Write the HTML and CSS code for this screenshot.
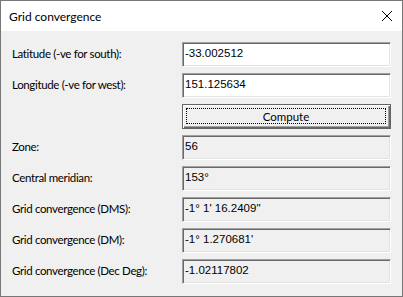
FILE: index.html
```html
<!DOCTYPE html>
<html lang="en">
<head>
    <meta charset="UTF-8">
    <title>Grid convergence</title>
    <link rel="stylesheet" href="styles.css">
</head>
<body>
    <div class="window">
        <div class="titlebar">
            <span class="title">Grid convergence</span>
            <svg class="close" width="12" height="12" viewBox="0 0 12 12">
                <path d="M1 1 L11 11 M11 1 L1 11" stroke="#000" stroke-width="1" fill="none"/>
            </svg>
        </div>
        <div class="content">
            <label class="label">Latitude (-ve for south):</label>
            <div class="field">-33.002512</div>

            <label class="label">Longitude (-ve for west):</label>
            <div class="field">151.125634</div>

            <span></span>
            <div class="button"><span class="focus">Compute</span></div>

            <label class="label">Zone:</label>
            <div class="field readonly">56</div>

            <label class="label">Central meridian:</label>
            <div class="field readonly">153°</div>

            <label class="label">Grid convergence (DMS):</label>
            <div class="field readonly">-1° 1' 16.2409"</div>

            <label class="label">Grid convergence (DM):</label>
            <div class="field readonly">-1° 1.270681'</div>

            <label class="label">Grid convergence (Dec Deg):</label>
            <div class="field readonly">-1.02117802</div>
        </div>
    </div>
</body>
</html>
```

FILE: styles.css
```css
* {
    margin: 0;
    padding: 0;
    box-sizing: border-box;
}
body {
    font-family: Lato, 'Noto Sans', sans-serif;
    font-size: 11.5px;
    color: #000;
    background: #f0f0f0;
}
.window {
    width: 403px;
    height: 297px;
    border: 1px solid #777777;
    background: #f0f0f0;
    display: flex;
    flex-direction: column;
}
.titlebar {
    height: 30px;
    background: #fff;
    display: flex;
    align-items: center;
    justify-content: space-between;
    padding: 0 9px 0 8px;
}
.title {
    font-size: 12px;
}
.close {
    display: block;
}
.content {
    display: grid;
    grid-template-columns: 1fr 209px;
    grid-auto-rows: 25px;
    row-gap: 6px;
    padding: 11px 11px 0 11px;
}
.label {
    display: flex;
    align-items: center;
    padding-bottom: 2px;
    letter-spacing: -0.35px;
}
.field {
    border-top: 1px solid #a0a0a0;
    border-left: 1px solid #a0a0a0;
    border-bottom: 1px solid #fff;
    border-right: 1px solid #fff;
    box-shadow: inset 1px 1px #696969, inset -1px -1px #e3e3e3;
    background: #fff;
    font-family: 'Liberation Sans', Arial, sans-serif;
    font-size: 11.5px;
    padding: 4px 0 0 2px;
}
.field.readonly {
    background: #f0f0f0;
}
.button {
    border: 1px solid #646464;
    box-shadow: inset 1px 1px #fff, inset -1px -1px #696969, inset -2px -2px #a0a0a0;
    background: #f0f0f0;
    padding: 3px 4px 4px 3px;
    display: flex;
}
.focus {
    flex: 1;
    border: 1px dotted #000;
    display: flex;
    align-items: center;
    justify-content: center;
    font-size: 11.5px;
}
```
